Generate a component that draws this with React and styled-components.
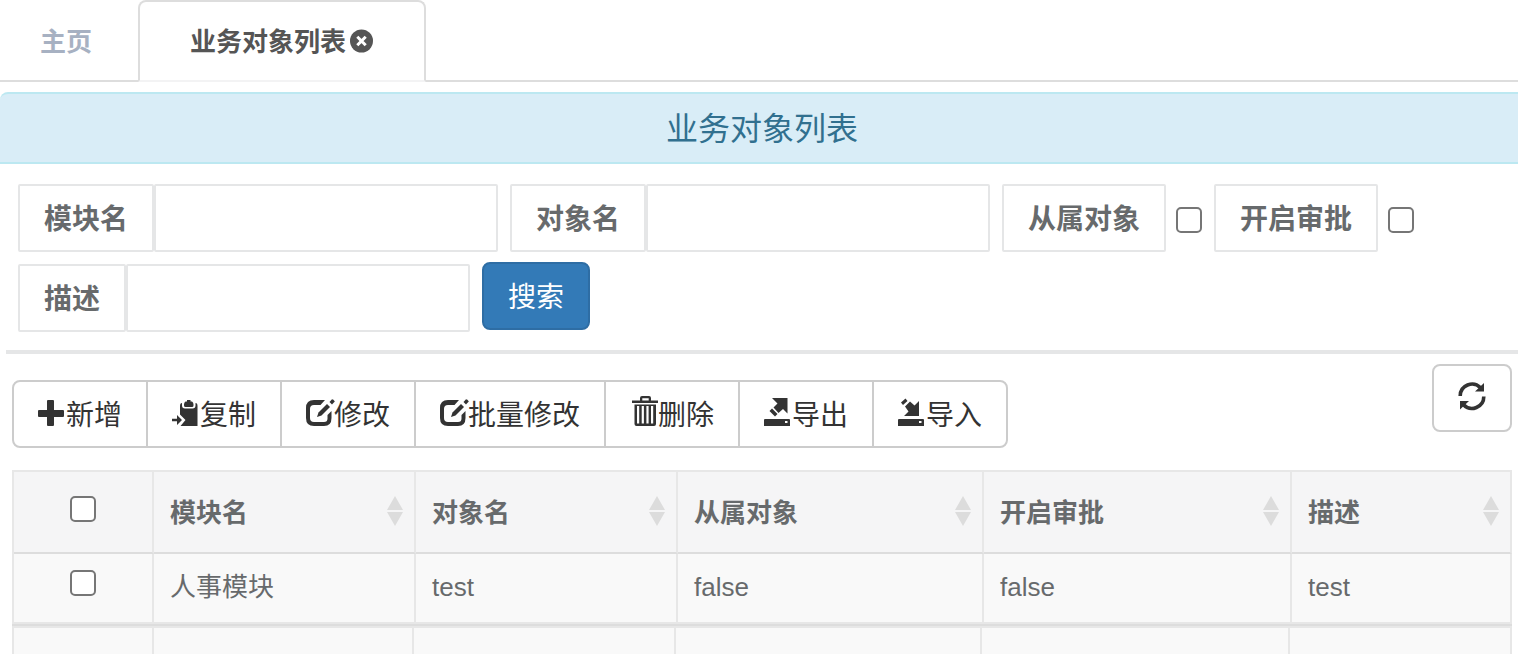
import React from 'react';
import styled, { createGlobalStyle } from 'styled-components';

//Styled Components
const GlobalStyle = createGlobalStyle`
    *, *::before, *::after {
        box-sizing: border-box;
    }
    body {
        margin: 0;
        background: #fff;
        color: #676a6c;
        font-family: "Liberation Sans", "Noto Sans CJK SC", sans-serif;
        font-size: 26px;
        line-height: 36px;
    }
    button, input {
        font: inherit;
    }
`;
const Page = styled.div`
    overflow: hidden;
`;
const Tabs = styled.nav`
    display: flex;
    border-bottom: 2px solid #ddd;
`;
const Tab = styled.a`
    display: flex;
    align-items: center;
    gap: 4px;
    height: 82px;
    margin-bottom: -2px;
    padding: ${props => (props.$active ? '2px 50px 0' : '4px 46px 0 40px')};
    border: ${props => (props.$active ? '2px solid #ddd' : '0')};
    border-bottom: 2px solid ${props => (props.$active ? '#f3f3f4' : '#ddd')};
    border-radius: ${props => (props.$active ? '8px 8px 0 0' : '0')};
    color: ${props => (props.$active ? '#555' : '#a7b1c2')};
    font-weight: 700;
    text-decoration: none;
`;
const CloseTab = styled.button`
    display: flex;
    padding: 0 0 2px;
    border: 0;
    background: none;
    color: inherit;
`;
const Title = styled.h1`
    margin: 10px 0 0;
    padding: 13px 0 11px 6px;
    border: solid #bce8f1;
    border-width: 2px 0;
    border-radius: 8px 0 0 0;
    background: #d9edf7;
    color: #31708f;
    font-size: 32px;
    font-weight: 400;
    line-height: 44px;
    text-align: center;
`;
const SearchForm = styled.form`
    display: flex;
    flex-wrap: wrap;
    gap: 12px;
    padding: 20px 18px 18px;
    font-size: 28px;
`;
const Field = styled.div`
    display: flex;
    align-items: center;
`;
const FieldLabel = styled.label`
    padding: 16px 24px 12px;
    border: 2px solid #e5e6e7;
    border-radius: 2px;
    font-weight: 700;
`;
const FieldInput = styled.input`
    width: 344px;
    height: 68px;
    padding: 12px 24px;
    border: 2px solid #e5e6e7;
    border-radius: 2px;
    background: #fff;
    color: inherit;
`;
const Checkbox = styled.input`
    appearance: none;
    display: block;
    width: 26px;
    height: 26px;
    margin: ${props => props.$margin || '0'};
    border: 2px solid #767676;
    border-radius: 5px;
    background: #fff;
`;
const SearchButton = styled.button`
    height: 68px;
    margin-top: -2px;
    padding: 4px 24px 0;
    border: 2px solid #2e6da4;
    border-radius: 8px;
    background: #337ab7;
    color: #fff;
`;
const Divider = styled.hr`
    height: 4px;
    margin: 0 0 0 6px;
    border: 0;
    background: #e5e6e7;
`;
const Toolbar = styled.div`
    display: flex;
    justify-content: space-between;
    align-items: flex-start;
    padding: 10px 6px 22px 12px;
`;
const ButtonGroup = styled.div`
    display: flex;
    margin-top: 16px;
`;
const ToolButton = styled.button`
    display: flex;
    align-items: center;
    height: 68px;
    padding: 4px 24px 0;
    border: 2px solid #ccc;
    background: #fff;
    color: #333;
    font-size: 28px;
    white-space: nowrap;
    & + & {
        margin-left: -2px;
    }
    &:first-child {
        border-radius: 8px 0 0 8px;
    }
    &:last-child {
        border-radius: 0 8px 8px 0;
    }
    &:only-child {
        border-radius: 8px;
    }
`;
const GlyphIcon = styled.svg`
    width: 28px;
    height: 36px;
    margin-bottom: 4px;
    overflow: visible;
    fill: currentColor;
`;
const SortGlyph = styled.svg`
    width: 18px;
    height: 30px;
    margin-bottom: 4px;
    fill: #dcdcdc;
`;
const TableArea = styled.div`
    padding: 0 6px 0 12px;
`;
const Table = styled.table`
    width: 100%;
    table-layout: fixed;
    border-spacing: 0;
    border: solid #e7e7e7;
    border-width: 2px 0 0 2px;
    text-align: left;
`;
const HeadCell = styled.th`
    height: 82px;
    padding: 2px 10px 0 16px;
    border-right: 2px solid #e7e7e7;
    border-bottom: 2px solid #ddd;
    background: #f5f5f6;
    font-weight: 700;
`;
const HeadContent = styled.div`
    display: flex;
    align-items: center;
    justify-content: space-between;
`;
const Cell = styled.td`
    height: 70px;
    padding: 0 16px 2px;
    border-right: 2px solid #e7e7e7;
    border-bottom: 2px solid #e7e7e7;
    background: #f9f9f9;
`;
const FootWrap = styled.div`
    border-top: 2px solid #ddd;
`;
const FootCell = styled.td`
    height: 26px;
    padding: 0;
    border-right: 2px solid #e7e7e7;
    background: #f9f9f9;
`;

//Icons
const drive = 'M1 23h24q1 0 1 1v6H0v-6q0-1 1-1zM21 25v2h2.500v-2z';
const glyphs = {
    plus: <path d="M10 4h5q1 0 1 1v9h9q1 0 1 1v5q0 1-1 1h-9v8q0 1-1 1h-5q-1 0-1-1v-8H1q-1 0-1-1v-5q0-1 1-1h8V5q0-1 1-1z" />,
    copy: (
        <>
            <path d="M8 10q0-3 2-3v2.500q0 3 3 3h7.500q3 0 3-3V7q2 0 2 3v20H8.500l5-6L8 18.500z" />
            <path d="M15 4h3.500v1.500h1.500q1.500 1 1.500 3v1q0 1.500-1.500 1.500h-6.500q-1.500 0-1.500-1.500v-1q0-2 1.500-3H15z" />
            <path d="M0 22.800h5V19l5 5-5 5v-3.800H0z" />
        </>
    ),
    edit: (
        <>
            <path d="M19 4H8Q0 4 0 12v10q0 8 8 8h10q7.500 0 7.500-8v-7l-4 4v3.500q0 3.500-3.500 3.500H8q-4 0-4-4v-9q0-4 4-4h6.500z" />
            <path d="M11 21l1.500-4.500L21 8l3 3-8.500 8.500z" />
            <path d="M23.500 6L26 3.300q1.500 0 2.800 2.200L26 8.500z" />
        </>
    ),
    trash: (
        <path fillRule="evenodd" d="M10 4.500V2q0-2 2-2h7q2 0 2 2v2.500h7V7H2V4.500zM12.300 4.500h6.400V2.200h-6.400zM4.500 8.500H26V28q0 2-2 2H6.500q-2 0-2-2zM7 10v17.500h2.200V10zM11.700 10v17.500h2.200V10zM16.400 10v17.500h2.200V10zM21 10v17.500h2.200V10z" />
    ),
    export: (
        <>
            <path d="M8 2h15.500v15.500L19 13l-4.500 4-5-5.500 4-4z" />
            <path d="M8 12.500l5.500 5.500-2.500 2.500-5.500-5.500z" />
            <path fillRule="evenodd" d={drive} />
        </>
    ),
    import: (
        <>
            <path d="M21 5v15H6l4.500-4.500-3.500-5L12 5.500l4.500 4z" />
            <path d="M3 6.500L7.500 2.500l2 2.500L5 9z" />
            <path fillRule="evenodd" d={drive} />
        </>
    ),
    refresh: (
        <>
            <path d="M2.200 16A11.800 11.800 0 0 1 22.500 7.800M25.800 16.500A11.800 11.800 0 0 1 5.500 24.700" fill="none" stroke="currentColor" strokeWidth="3.600" />
            <path d="M26 3v8.500h-9zM2 29.500V21h9z" />
        </>
    )
};

const Glyph = ({ name }) => (
    <GlyphIcon viewBox="0 0 28 36" aria-hidden="true">
        {glyphs[name]}
    </GlyphIcon>
);

const SortIcon = () => (
    <SortGlyph viewBox="0 0 18 30" aria-hidden="true">
        <path d="M9 0l8 14H1zM1 16h16L9 30z" />
    </SortGlyph>
);

const tools = [
    { icon: 'plus', text: '新增' },
    { icon: 'copy', text: '复制' },
    { icon: 'edit', text: '修改' },
    { icon: 'edit', text: '批量修改' },
    { icon: 'trash', text: '删除' },
    { icon: 'export', text: '导出' },
    { icon: 'import', text: '导入' }
];
const headings = ['模块名', '对象名', '从属对象', '开启审批', '描述'];
const rows = [['人事模块', 'test', 'false', 'false', 'test']];

const Columns = ({ widths }) => (
    <colgroup>
        {widths.map((width, i) => <col key={i} width={width} />)}
        <col />
    </colgroup>
);

const TextField = ({ id, label }) => (
    <Field>
        <FieldLabel htmlFor={id}>{label}</FieldLabel>
        <FieldInput id={id} type='text' />
    </Field>
);

const CheckField = ({ id, label }) => (
    <Field>
        <FieldLabel htmlFor={id}>{label}</FieldLabel>
        <Checkbox id={id} type='checkbox' $margin='4px 0 0 10px' />
    </Field>
);

const App = () => (
    <Page>
        <GlobalStyle />
        <Tabs>
            <Tab href='#home'>主页</Tab>
            <Tab href='#list' $active>
                业务对象列表
                <CloseTab type='button' aria-label='关闭'>
                    <svg width="24" height="24" viewBox="0 0 24 24" aria-hidden="true">
                        <circle cx="11.500" cy="12" r="11.500" fill="currentColor" />
                        <path d="M7.300 7.800l8.400 8.400M15.700 7.800l-8.400 8.400" stroke="#fff" strokeWidth="3" />
                    </svg>
                </CloseTab>
            </Tab>
        </Tabs>
        <Title>业务对象列表</Title>
        <SearchForm onSubmit={e => e.preventDefault()}>
            <TextField id='module' label='模块名' />
            <TextField id='object' label='对象名' />
            <CheckField id='slave' label='从属对象' />
            <CheckField id='approval' label='开启审批' />
            <TextField id='description' label='描述' />
            <SearchButton type='submit'>搜索</SearchButton>
        </SearchForm>
        <Divider />
        <Toolbar>
            <ButtonGroup>
                {tools.map(tool => (
                    <ToolButton key={tool.text} type='button'>
                        <Glyph name={tool.icon} />
                        {tool.text}
                    </ToolButton>
                ))}
            </ButtonGroup>
            <div>
                <ToolButton type='button' aria-label='刷新'>
                    <Glyph name='refresh' />
                </ToolButton>
            </div>
        </Toolbar>
        <TableArea>
            <Table>
                <Columns widths={[140, 262, 262, 306, 308]} />
                <thead>
                    <tr>
                        <HeadCell>
                            <Checkbox type='checkbox' aria-label='全选' $margin='0 0 8px 40px' />
                        </HeadCell>
                        {headings.map(heading => (
                            <HeadCell key={heading}>
                                <HeadContent>
                                    {heading}
                                    <SortIcon />
                                </HeadContent>
                            </HeadCell>
                        ))}
                    </tr>
                </thead>
                <tbody>
                    {rows.map(row => (
                        <tr key={row[0]}>
                            <Cell>
                                <Checkbox type='checkbox' aria-label={row[0]} $margin='0 0 8px 40px' />
                            </Cell>
                            {row.map((value, i) => <Cell key={i}>{value}</Cell>)}
                        </tr>
                    ))}
                </tbody>
            </Table>
            <FootWrap>
                <Table>
                    <Columns widths={[140, 260, 262, 306, 308]} />
                    <tbody>
                        <tr>
                            <FootCell />
                            {headings.map(heading => <FootCell key={heading} />)}
                        </tr>
                    </tbody>
                </Table>
            </FootWrap>
        </TableArea>
    </Page>
);

export default App;
